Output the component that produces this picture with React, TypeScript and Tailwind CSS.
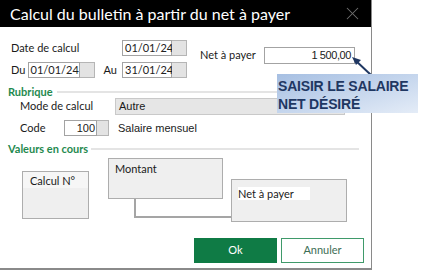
import { X } from 'lucide-react';

function DateField({ value, width = 'w-[50px]' }: { value: string; width?: string }) {
  return (
    <div className="flex h-[16px]">
      <div className={`${width} h-full border border-[#a3a3a3] bg-white pl-[2px] text-[11px] leading-[14px] text-[#222]`}>{value}</div>
      <div className="w-[15px] h-full border border-l-0 border-[#b5b5b5] bg-[#e3e3e3]" />
    </div>
  );
}

function Section({ title, lineFrom }: { title: string; lineFrom: string }) {
  return (
    <div className="flex items-center h-[10px] pl-[8px] pr-[10px]">
      <span className="text-[11px] font-bold leading-[10px] text-[#1f8a4f]">{title}</span>
      <div className={`flex-1 h-[2px] bg-[#e4e4e4] ${lineFrom}`} />
    </div>
  );
}

export default function App() {
  return (
    <div className="relative w-[424px] h-[273px] bg-white overflow-hidden font-['Lato','Open_Sans',sans-serif] text-[#1a1a1a]">
      {/* --- DIALOG --- */}
      <div className="w-[372px] h-[270px] flex flex-col bg-white border-r border-b-2 border-[#8a8a8a]">
        <div className="h-[27px] bg-black flex items-center justify-between pl-[10px] pr-[8px]">
          <span className="text-white text-[16px] leading-none pt-[1px]">Calcul du bulletin à partir du net à payer</span>
          <X className="w-[21px] h-[21px] text-[#6f6f6f]" strokeWidth={1.2} />
        </div>

        <div className="flex-1 flex flex-col">
          {/* dates + net */}
          <div className="flex mt-[13px]">
            <div className="flex flex-col gap-[5px] w-[187px]">
              <div className="flex items-center">
                <span className="pl-[11px] w-[122px] text-[11px]">Date de calcul</span>
                <DateField value="01/01/24" />
              </div>
              <div className="flex items-center">
                <span className="pl-[11px] w-[28px] text-[11px]">Du</span>
                <DateField value="01/01/24" width="w-[52px]" />
                <span className="ml-[9px] w-[19px] text-[11px]">Au</span>
                <DateField value="31/01/24" />
              </div>
            </div>
            <div className="flex items-center pt-[7px] h-[24px] ml-[13px]">
              <span className="w-[64px] text-[11px]">Net à payer</span>
              <div className="w-[91px] h-[17px] border border-[#a3a3a3] bg-white pr-[3px] text-right text-[11px] leading-[15px] font-['Liberation_Sans',sans-serif] tracking-[-0.4px]">1 500,00</div>
            </div>
          </div>

          {/* rubrique */}
          <div className="mt-[9px]">
            <Section title="Rubrique" lineFrom="ml-[4px]" />
          </div>
          <div className="flex items-center mt-[1px] h-[17px]">
            <span className="pl-[20px] w-[115px] text-[11px]">Mode de calcul</span>
            <div className="w-[230px] h-full border border-[#c9c9c9] bg-[#e6e6e6] pl-[3px] text-[11px] leading-[15px] font-['Liberation_Sans',sans-serif]">Autre</div>
          </div>
          <div className="flex items-center mt-[5px] h-[16px]">
            <span className="pl-[20px] w-[64px] text-[11px]">Code</span>
            <div className="flex h-full">
              <div className="w-[33px] h-full border border-[#a3a3a3] bg-white pr-[1px] text-right text-[11px] leading-[14px] font-['Liberation_Sans',sans-serif]">100</div>
              <div className="w-[12px] h-full border border-l-0 border-[#b5b5b5] bg-[#e3e3e3]" />
            </div>
            <span className="ml-[9px] text-[11px] font-['Liberation_Sans',sans-serif]">Salaire mensuel</span>
          </div>

          {/* valeurs en cours */}
          <div className="mt-[8px]">
            <Section title="Valeurs en cours" lineFrom="ml-[3px] mr-[2px]" />
          </div>
          <div className="relative mt-[2px] h-[68px]">
            <div className="absolute left-[22px] top-[15px] w-[67px] h-[48px] border border-[#adadad] bg-[#efefef]">
              <div className="h-[16px] bg-[#f6f6f6] pl-[7px] pt-[3px] text-[11px] leading-[12px]">Calcul N°</div>
            </div>
            <div className="absolute left-[108px] top-[2px] w-[115px] h-[41px] border border-[#adadad] bg-[#efefef] pl-[6px] pt-[4px] text-[11px] leading-[12px]">Montant</div>
            <div className="absolute left-[134px] top-[43px] w-[97px] h-[19px] border-l-2 border-b-2 border-[#a5a5a5]" />
            <div className="absolute left-[231px] top-[23px] w-[116px] h-[43px] border border-[#adadad] bg-[#efefef] pl-[6px] pt-[7px]">
              <div className="w-[72px] h-[13px] bg-white text-[11px] leading-[13px]">Net à payer</div>
            </div>
          </div>

          {/* buttons */}
          <div className="flex justify-end gap-[4px] mt-[14px] pr-[7px]">
            <button className="w-[83px] h-[25px] bg-[#0f7b45] text-white text-[11px]">Ok</button>
            <button className="w-[83px] h-[25px] border border-[#3f9a6a] bg-white text-[#3d6e55] text-[11px]">Annuler</button>
          </div>
        </div>
      </div>

      {/* --- ANNOTATION --- */}
      <svg className="absolute left-[346px] top-[52px]" width="32" height="26" viewBox="0 0 32 26">
        <line x1="9" y1="8" x2="25" y2="23" stroke="#1f3762" strokeWidth="2" />
        <polygon points="6,5 15,8 10,13" fill="#1f3762" />
      </svg>
      <div className="absolute left-[277px] top-[74px] w-[141px] h-[39px] bg-gradient-to-br from-[#a6bfe2] to-[#e4ecf7] pl-[1px] pt-[3px] font-['Liberation_Sans',sans-serif] font-bold text-[14px] leading-[18px] text-[#1f3762] tracking-[-0.2px]">
        <div>SAISIR LE SALAIRE</div>
        <div>NET DÉSIRÉ</div>
      </div>
    </div>
  );
}
